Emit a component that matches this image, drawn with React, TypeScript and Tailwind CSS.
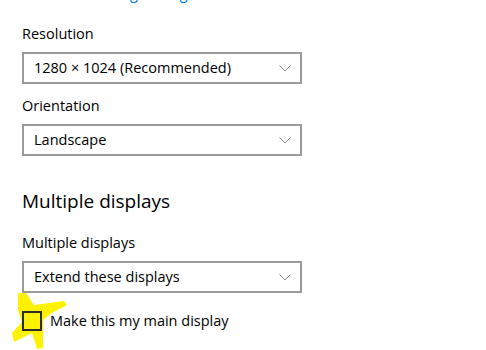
const font = { fontFamily: '"Open Sans", "Noto Sans", sans-serif' };

function Dropdown({ value }: { value: string }) {
  return (
    <div className="w-[280px] h-[32px] border-2 border-[#999999] bg-white flex items-center justify-between pl-[10px] pr-[9px]">
      <span className="text-[14.5px] text-black leading-none">{value}</span>
      <svg width="12" height="7" viewBox="0 0 12 7" className="shrink-0">
        <path d="M0.5 0.5 L6 6 L11.5 0.5" fill="none" stroke="#8a8a8a" strokeWidth="1" />
      </svg>
    </div>
  );
}

export default function App() {
  return (
    <div className="w-[486px] h-[350px] overflow-hidden bg-white relative" style={font}>
      <div className="flex flex-col pl-[22px]">
        <div className="h-[20px] mt-[-16px] leading-[20px] text-[14.5px] text-[#0078d7]">
          Advanced scaling settings
        </div>

        <div className="mt-[20px] text-[14.5px] leading-[20px] text-black">Resolution</div>
        <div className="mt-[8px]">
          <Dropdown value="1280 × 1024 (Recommended)" />
        </div>

        <div className="mt-[12px] text-[14.5px] leading-[20px] text-black">Orientation</div>
        <div className="mt-[8px]">
          <Dropdown value="Landscape" />
        </div>

        <div className="mt-[31px] text-[19px] leading-[28px] text-black">Multiple displays</div>

        <div className="mt-[18px] text-[14.5px] leading-[20px] text-black">Multiple displays</div>
        <div className="mt-[8px]">
          <Dropdown value="Extend these displays" />
        </div>

        <div className="relative mt-[18px] flex items-center gap-[8px]">
          <svg
            width="70"
            height="60"
            viewBox="0 0 70 60"
            className="absolute left-[-10px] top-[-19px]"
          >
            <polygon
              points="6,1 14,1 22,13 52,9 55,13 40,21 31,28 31,45 31,56 25,57 20,41 2,50 0,41 10,30 6,18"
              fill="#fff200"
            />
          </svg>
          <div className="relative w-[20px] h-[20px] border-2 border-[#2b2b2b]" />
          <span className="relative text-[14.5px] leading-[20px] text-black">Make this my main display</span>
        </div>
      </div>
    </div>
  );
}
